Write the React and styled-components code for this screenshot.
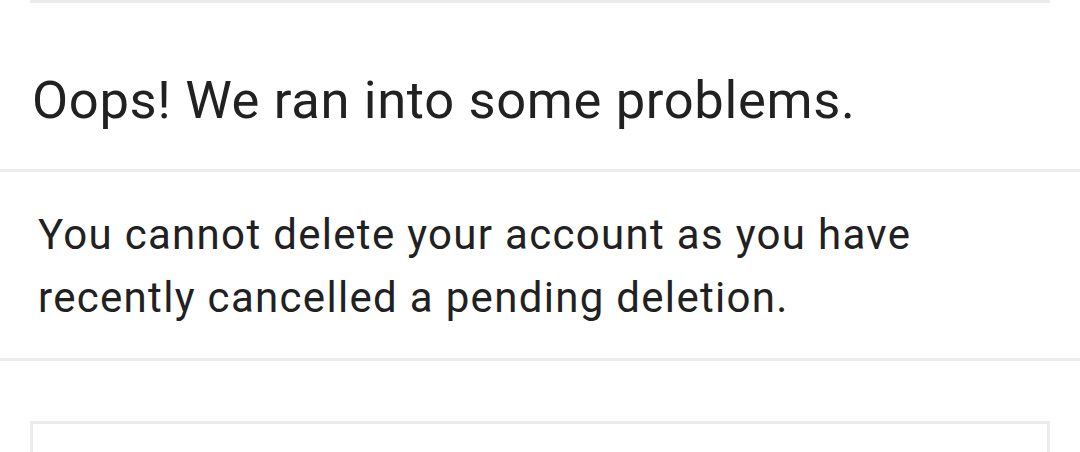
import React from "react";
import styled, { createGlobalStyle } from "styled-components";

const GlobalStyle = createGlobalStyle`
  html, body {
    margin: 0;
    padding: 0;
    background: #ffffff;
  }

  body {
    font-family: Roboto, "Noto Sans", "Liberation Sans", sans-serif;
    color: #212121;
    overflow: hidden;
  }
`;

const colors = {
  text: "#212121",
  line: "#ececec",
};

const Screen = styled.div`
  display: flex;
  flex-direction: column;
  width: 1080px;
  height: 452px;
  overflow: hidden;

  & > * {
    flex: none;
  }
`;

const PreviousCard = styled.div`
  margin: 0 30px;
  height: 3px;
  background: ${colors.line};
`;

const DialogTitle = styled.h1`
  margin: 0;
  padding: 67px 32px 38px;
  font-size: 52.5px;
  font-weight: 400;
  line-height: 61px;
  letter-spacing: 0.66px;
  color: ${colors.text};
`;

const Divider = styled.hr`
  margin: 0;
  border: 0;
  height: 3px;
  background: ${colors.line};
`;

const Message = styled.p`
  margin: 0;
  padding: 31px 38px 29px;
  font-size: 42px;
  line-height: 63px;
  letter-spacing: 1.31px;
  color: ${colors.text};
`;

const NextCard = styled.div`
  margin: 60px 30px 0;
  height: 200px;
  border: 3px solid ${colors.line};
  border-bottom: 0;
`;

export default function App() {
  return (
    <>
      <GlobalStyle />
      <Screen>
        <PreviousCard />
        <DialogTitle>Oops! We ran into some problems.</DialogTitle>
        <Divider />
        <Message>
          You cannot delete your account as you have
          <br />
          recently cancelled a pending deletion.
        </Message>
        <Divider />
        <NextCard />
      </Screen>
    </>
  );
}
